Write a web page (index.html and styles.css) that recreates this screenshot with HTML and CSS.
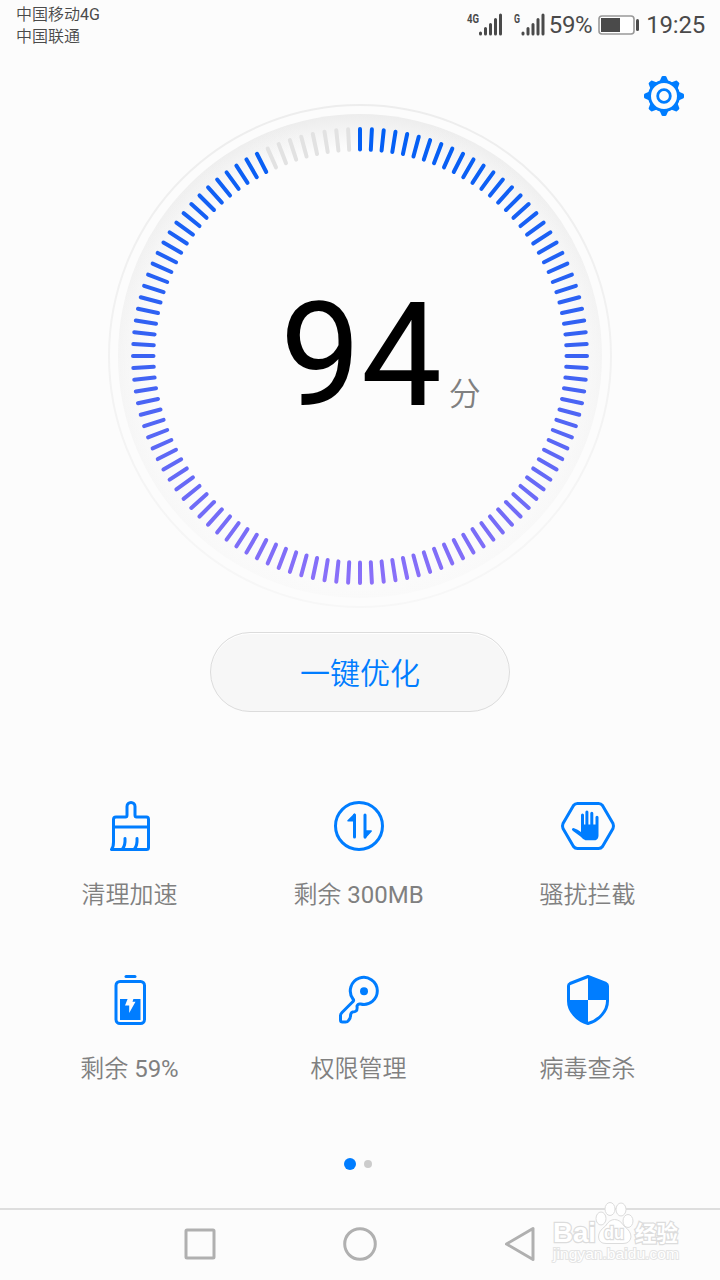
FILE: index.html
```html
<!DOCTYPE html>
<html lang="zh-CN">
  <head>
    <meta charset="UTF-8" />
    <meta name="viewport" content="width=device-width, initial-scale=1.0" />
    <title>手机管家</title>
    <link rel="stylesheet" href="styles.css">
  </head>
  <body>
    <header class="status-bar">
      <div class="carriers">
        <div>中国移动<span class="latin">4G</span></div>
        <div>中国联通</div>
      </div>
      <div class="status-icons">
        <svg class="signal" width="38" height="28" viewBox="0 0 38 28">
          <text class="net" x="1" y="12" textLength="12" lengthAdjust="spacingAndGlyphs">4G</text>
          <path d="M14.500 22v1M19.500 17.500v5.500M24.500 13.500v9.500M29.500 8.500v14.500M34.500 4v19" />
        </svg>
        <svg class="signal signal-2" width="33" height="28" viewBox="0 0 33 28">
          <text class="net" x="1" y="12" textLength="6" lengthAdjust="spacingAndGlyphs">G</text>
          <path d="M10 22v1M15 17.500v5.500M20 13.500v9.500M25 8.500v14.500M30 4v19" />
        </svg>
        <span class="percent">59%</span>
        <svg class="battery" width="42" height="20" viewBox="0 0 42 20">
          <rect x="1" y="1" width="35" height="18" rx="3" fill="#fff" stroke="#999" stroke-width="1.600" />
          <rect x="3" y="3" width="19" height="14" fill="#4a4a4a" />
          <rect x="38" y="4" width="3" height="12" rx="1.500" fill="#4a4a4a" />
        </svg>
        <span class="time">19:25</span>
      </div>
    </header>

    <div class="toolbar">
      <svg width="40" height="40" viewBox="-20 -20 40 40">
        <g id="gear" fill="#007dff"></g>
        <circle r="14.500" fill="none" stroke="#007dff" stroke-width="3" />
        <circle r="6.300" fill="none" stroke="#007dff" stroke-width="2.800" />
      </svg>
    </div>

    <main>
      <section class="dial">
        <svg class="dial-face" width="504" height="504" viewBox="-252 -252 504 504">
          <defs>
            <radialGradient id="rim" gradientUnits="userSpaceOnUse" cx="0" cy="0" r="242">
              <stop offset="0.86" stop-color="#fcfcfc" />
              <stop offset="1" stop-color="#ededed" />
            </radialGradient>
            <linearGradient id="fade" x1="0" y1="0" x2="0" y2="1">
              <stop offset="0" stop-color="#fcfcfc" stop-opacity="0" />
              <stop offset="0.5" stop-color="#fcfcfc" stop-opacity="0.5" />
              <stop offset="1" stop-color="#fcfcfc" stop-opacity="0.85" />
            </linearGradient>
            <linearGradient id="outer" x1="0" y1="0" x2="0" y2="1">
              <stop offset="0" stop-color="#ededed" />
              <stop offset="1" stop-color="#f7f7f7" />
            </linearGradient>
            <linearGradient id="score" gradientUnits="userSpaceOnUse" x1="0" y1="-229" x2="0" y2="229">
              <stop offset="0" stop-color="#005ff5" />
              <stop offset="0.5" stop-color="#3a62f3" />
              <stop offset="1" stop-color="#8c70f9" />
            </linearGradient>
          </defs>
          <circle r="251" fill="none" stroke="url(#outer)" stroke-width="2" />
          <circle r="242" fill="url(#rim)" />
          <circle r="243" fill="url(#fade)" />
          <g id="ticks" stroke-width="4" stroke-linecap="round"></g>
        </svg>
        <div class="score">
          <span class="score-value">94</span>
          <span class="score-unit">分</span>
        </div>
      </section>

      <button class="optimize">一键优化</button>

      <section class="features">
        <div class="feature">
          <svg width="56" height="52" viewBox="0 0 56 52" class="line">
            <path d="M9.500 49.500Q11.500 47 11.500 42V19.500Q11.500 17 14 17H23.500Q25 17 25 15V6.500A4 4 0 0 1 33 6.500V15Q33 17 34.500 17H44.500Q46.500 17 46.500 19.500V47.500Q46.500 49.500 44.500 49.500H10" />
            <path d="M11.500 27H46.500M23 38.500Q23.500 45 20.500 49M35 38.500Q35.500 45 32.500 49" />
          </svg>
          <span>清理加速</span>
        </div>
        <div class="feature">
          <svg width="56" height="52" viewBox="0 0 56 52" class="line">
            <circle cx="28" cy="26" r="23.500" />
            <path d="M23.500 37V15M34 15V37" />
            <path class="solid" stroke-width="1.500" d="M23.500 14.200L17 20.700H23.500ZM34 37.800L40.200 31H34Z" />
          </svg>
          <span>剩余 <span class="latin">300MB</span></span>
        </div>
        <div class="feature">
          <svg width="56" height="52" viewBox="0 0 56 52" class="line">
            <path d="M17.500 3.500H38.500Q41 3.500 42.500 5.500L53 23.500Q54 26 53 28.500L42.500 46.500Q41 48.500 38.500 48.500H17.500Q15 48.500 13.500 46.500L3 28.500Q2 26 3 23.500L13.500 5.500Q15 3.500 17.500 3.500Z" />
            <path class="solid" stroke="none" d="M21 32V15a1.500 1.500 0 0 1 3 0V24.500h1.400V12a1.500 1.500 0 0 1 3 0V24.500h1.900V13.300a1.500 1.500 0 0 1 3 0V24.500h2.200V17.300a1.500 1.500 0 0 1 3 0V35.500Q38.500 39 35.500 40.300H25.500Q23 39.500 20.500 36.500L13 31Q10.500 28.500 13.500 28Q18 29.500 21 32Z" />
          </svg>
          <span>骚扰拦截</span>
        </div>
        <div class="feature">
          <svg width="56" height="52" viewBox="0 0 56 52" class="line">
            <path d="M24 2.500H33" />
            <rect x="14" y="7.500" width="28.500" height="42" rx="4" />
            <rect class="solid" stroke="none" x="18" y="25" width="20.500" height="21" />
            <path d="M26 24H31.700L30.500 27.700H33.500L27.200 39V31.500H23Z" fill="#fcfcfc" stroke="none" />
          </svg>
          <span>剩余 <span class="latin">59%</span></span>
        </div>
        <div class="feature">
          <svg width="56" height="52" viewBox="0 0 56 52" class="line">
            <path d="M22 25A13.500 13.500 0 1 1 29.500 30Q27 29.500 26 32Q26.500 36 25 37Q24 38 21.500 38Q19.500 39 19.500 42Q19.500 44 17.500 46.500Q16.500 48 14.500 48H11.500Q9.500 48 9.500 46V41.500Q9.500 40 11 38.500L21.500 28Q23.500 26.300 22 25Z" />
            <circle class="solid" stroke="none" cx="33" cy="17.300" r="4" />
          </svg>
          <span>权限管理</span>
        </div>
        <div class="feature">
          <svg width="56" height="52" viewBox="0 0 56 52" class="line">
            <path d="M28 2.500L46 9.500Q47.500 10.200 47.500 12V27C47.500 37 39 46.500 28 49.500C17 46.500 8.500 37 8.500 27V12Q8.500 10.200 10 9.500Z" />
            <path class="solid" stroke="none" d="M28 2.500L47 10V26H28ZM28 26V49.500C17 46.500 8.500 37 8.500 26Z" />
          </svg>
          <span>病毒查杀</span>
        </div>
      </section>

      <div class="pager">
        <i class="dot dot-active"></i>
        <i class="dot"></i>
      </div>
    </main>

    <nav class="nav-bar">
      <svg width="36" height="36" viewBox="0 0 36 36"><rect x="4" y="4" width="28" height="28" rx="1" /></svg>
      <svg width="36" height="36" viewBox="0 0 36 36"><circle cx="18" cy="18" r="15.300" /></svg>
      <svg width="36" height="36" viewBox="0 0 36 36"><path d="M4.500 18L31 2.500V33.500Z" /></svg>
    </nav>

    <div class="watermark">
      <svg width="136" height="68" viewBox="0 0 136 68">
        <g fill="#fff" stroke="#dcdcdc">
          <g class="mark-text">
            <text x="3" y="42" font-size="28" textLength="43" lengthAdjust="spacingAndGlyphs">Bai</text>
            <text x="85" y="41" font-size="22" textLength="43" lengthAdjust="spacingAndGlyphs">经验</text>
          </g>
          <ellipse cx="51" cy="18.500" rx="5" ry="6.500" />
          <ellipse cx="60" cy="9" rx="5" ry="6.500" />
          <ellipse cx="71" cy="9.500" rx="5" ry="6.500" />
          <ellipse cx="78" cy="21" rx="5" ry="6.500" />
          <path d="M64.500 19.500Q70 19.500 74 26Q81 31 81 37Q80 43.500 73 43.500H56Q49 43.500 48.500 37Q48.500 31 55.500 26Q59.500 19.500 64.500 19.500Z" />
          <g class="mark-text">
            <text x="54" y="39" font-size="18" textLength="20" lengthAdjust="spacingAndGlyphs">du</text>
            <text class="mark-url" x="3" y="59" font-size="14" textLength="126" lengthAdjust="spacingAndGlyphs">jingyan.baidu.com</text>
          </g>
        </g>
      </svg>
    </div>

    <script>
      const SVG_NS = "http://www.w3.org/2000/svg";
      const ticks = document.getElementById("ticks");
      const total = 120;
      const filled = 112;

      for (let i = 0; i < total; i++) {
        const angle = (i * 2 * Math.PI) / total;
        const line = document.createElementNS(SVG_NS, "line");
        line.setAttribute("x1", Math.sin(angle) * 206.5);
        line.setAttribute("y1", -Math.cos(angle) * 206.5);
        line.setAttribute("x2", Math.sin(angle) * 227);
        line.setAttribute("y2", -Math.cos(angle) * 227);
        line.setAttribute("stroke", i < filled ? "url(#score)" : "#e2e2e2");
        ticks.appendChild(line);
      }

      // Gear teeth
      const gear = document.getElementById("gear");
      for (let i = 0; i < 8; i++) {
        const tooth = document.createElementNS(SVG_NS, "path");
        tooth.setAttribute("d", "M-4.5 -14.500L-2.500 -19Q-2.300 -20 -1 -20H1Q2.300 -20 2.500 -19L4.500 -14.500Z");
        tooth.setAttribute("transform", `rotate(${i * 45})`);
        gear.appendChild(tooth);
      }
    </script>
  </body>
</html>
```
FILE: styles.css
```css
* {
  box-sizing: border-box;
}
body {
  margin: 0;
  width: 720px;
  height: 1280px;
  overflow: hidden;
  position: relative;
  display: flex;
  flex-direction: column;
  background: #fcfcfc;
  font-family: Roboto, "Noto Sans CJK SC", sans-serif;
}
svg {
  display: block;
  flex-shrink: 0;
}
.latin {
  font-weight: 400;
}
.status-bar {
  height: 50px;
  padding: 3px 15px 0 16px;
  display: flex;
  justify-content: space-between;
  align-items: flex-start;
  color: #4a4a4a;
}
.carriers {
  padding-top: 1px;
  font-size: 16px;
  line-height: 22px;
  font-weight: 350;
}
.status-icons {
  display: flex;
  align-items: center;
  height: 44px;
  font-size: 24px;
}
.signal path {
  stroke: #4a4a4a;
  stroke-width: 3;
  stroke-linecap: round;
}
.net {
  fill: #4a4a4a;
  font-size: 13px;
  font-weight: bold;
}
.signal-2 {
  margin-left: 9px;
}
.percent {
  margin-left: 3px;
  letter-spacing: -0.4px;
}
.battery {
  margin-left: 6px;
}
.time {
  margin-left: 6px;
  letter-spacing: -0.2px;
}
.toolbar {
  height: 66px;
  padding: 26px 36px 0 0;
  display: flex;
  justify-content: flex-end;
}
main {
  display: flex;
  flex-direction: column;
  align-items: center;
}
.dial {
  display: grid;
  margin-top: -12px;
}
.dial-face,
.score {
  grid-area: 1 / 1;
}
.score {
  display: flex;
  align-items: baseline;
  padding: 168px 0 0 172px;
}
.score-value {
  font-size: 144px;
  line-height: 168px;
  color: #000;
}
.score-unit {
  margin-left: 7px;
  font-size: 32px;
  line-height: 32px;
  font-weight: 350;
  color: #808080;
}
.optimize {
  width: 300px;
  height: 80px;
  margin-top: 24px;
  padding: 0 0 2px;
  border: 1px solid #dcdcdc;
  border-radius: 40px;
  background: #f7f7f7;
  box-shadow: inset 0 1px 0 #fff;
  color: #007dff;
  font-family: inherit;
  font-size: 30px;
  font-weight: 350;
}
.features {
  width: 100%;
  padding: 88px 18px 0 15px;
  display: grid;
  grid-template-columns: repeat(3, 1fr);
  grid-auto-rows: 174px;
}
.feature {
  display: flex;
  flex-direction: column;
  align-items: center;
  gap: 27px;
  color: #808080;
  font-size: 24px;
  line-height: 32px;
  font-weight: 350;
}
.line {
  fill: none;
  stroke: #007dff;
  stroke-width: 3;
  stroke-linecap: round;
  stroke-linejoin: round;
}
.solid {
  fill: #007dff;
}
.pager {
  height: 12px;
  margin: 10px 4px 0 0;
  display: flex;
  align-items: center;
  gap: 8px;
}
.dot {
  width: 8px;
  height: 8px;
  border-radius: 50%;
  background: #ccc;
}
.dot-active {
  width: 12px;
  height: 12px;
  background: #007dff;
}
.nav-bar {
  height: 72px;
  margin-top: auto;
  border-top: 2px solid #dedede;
  display: flex;
  justify-content: center;
  align-items: center;
  gap: 124px;
  padding-bottom: 2px;
}
.nav-bar svg {
  fill: none;
  stroke: #b0b0b0;
  stroke-width: 3;
  stroke-linejoin: round;
}
.watermark {
  position: absolute;
  left: 550px;
  top: 1200px;
}
.mark-text {
  font-family: "Liberation Sans", "Noto Sans CJK SC", sans-serif;
  font-weight: bold;
  paint-order: stroke;
  stroke-width: 2.5;
}
.mark-url {
  font-weight: normal;
  stroke: #e4e4e4;
  stroke-width: 1.8;
}
```
